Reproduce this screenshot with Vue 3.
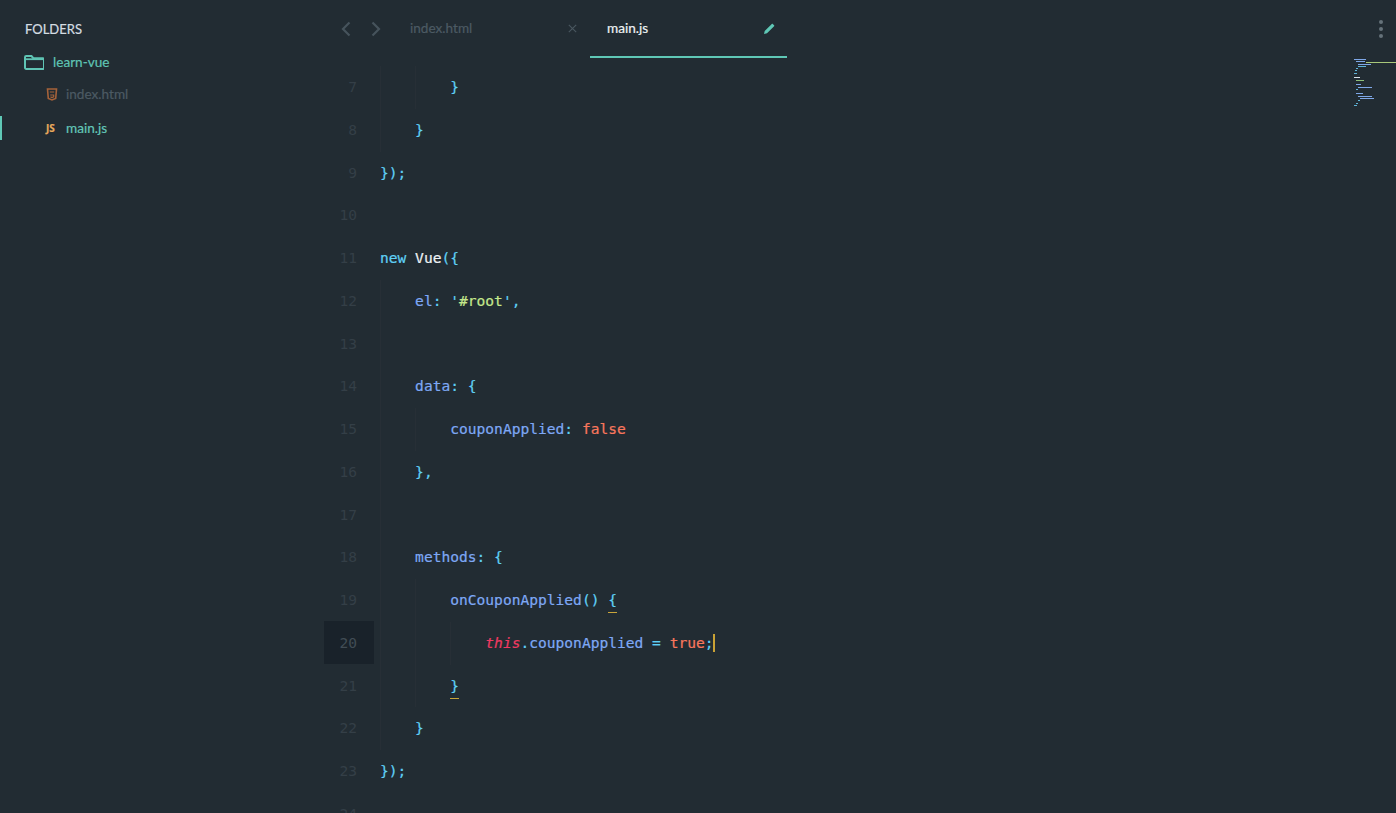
<script setup>
const C = { p: 'pun', k: 'key', w: 'wht', b: 'blu', s: 'str', o: 'org', t: 'ths' }
const lines = [
  { n: 7, guides: 2, code: [['}', 'p']] },
  { n: 8, guides: 1, code: [['}', 'p']] },
  { n: 9, guides: 0, code: [['});', 'p']] },
  { n: 10, guides: 0, code: [] },
  { n: 11, guides: 0, code: [['new', 'k'], [' Vue', 'w'], ['({', 'p']] },
  { n: 12, guides: 1, code: [['el', 'b'], [': ', 'p'], ["'", 'p'], ['#root', 's'], ["'", 'p'], [',', 'p']] },
  { n: 13, guides: 1, code: [] },
  { n: 14, guides: 1, code: [['data', 'b'], [': {', 'p']] },
  { n: 15, guides: 2, code: [['couponApplied', 'b'], [': ', 'p'], ['false', 'o']] },
  { n: 16, guides: 1, code: [['},', 'p']] },
  { n: 17, guides: 1, code: [] },
  { n: 18, guides: 1, code: [['methods', 'b'], [': {', 'p']] },
  { n: 19, guides: 2, code: [['onCouponApplied', 'b'], ['() ', 'p'], ['{', 'pm']] },
  { n: 20, guides: 3, active: true, code: [['this', 't'], ['.', 'p'], ['couponApplied', 'b'], [' = ', 'p'], ['true', 'o'], [';', 'p']] },
  { n: 21, guides: 2, code: [['}', 'pm']] },
  { n: 22, guides: 1, code: [['}', 'p']] },
  { n: 23, guides: 0, code: [['});', 'p']] },
  { n: 24, guides: 0, code: [] },
]
const cls = (c) => (c === 'pm' ? 'pun match' : C[c])
const mini = [
  { x: 0, w: 12, c: '#7fa8e8' }, { x: 2, w: 9, c: '#7fa8e8' }, { x: 4, w: 13, c: '#7fa8e8' },
  { x: 4, w: 8, c: '#5fb4d8' }, { x: 2, w: 2, c: '#5fb4d8' }, { x: 1, w: 2, c: '#5fb4d8' }, { x: 0, w: 3, c: '#5fb4d8' },
  { x: 0, w: 0, c: 'transparent' }, { x: 0, w: 6, c: '#d8e2ea' }, { x: 2, w: 8, c: '#8fc07a' },
  { x: 0, w: 0, c: 'transparent' }, { x: 2, w: 5, c: '#7fa8e8' }, { x: 4, w: 14, c: '#7fa8e8' }, { x: 2, w: 2, c: '#5fb4d8' },
  { x: 0, w: 0, c: 'transparent' }, { x: 2, w: 7, c: '#7fa8e8' }, { x: 4, w: 14, c: '#7fa8e8' }, { x: 6, w: 14, c: '#7fa8e8' },
  { x: 4, w: 2, c: '#5fb4d8' }, { x: 2, w: 2, c: '#5fb4d8' }, { x: 0, w: 3, c: '#5fb4d8' },
]
</script>

<template>
  <div class="app">
    <aside class="side">
      <div class="side-title">FOLDERS</div>
      <div class="row folder">
        <svg class="fold-ic" width="20" height="15" viewBox="0 0 20 15" fill="none">
          <path d="M1 2.200C1 1.500 1.500 1 2.200 1h5.300l1.800 2.200h9.500c.7 0 1.200.5 1.200 1.200v8.400c0 .7-.5 1.200-1.200 1.200H2.200C1.500 14 1 13.500 1 12.800z" stroke="#5fc4b4" stroke-width="2" />
          <path d="M1 4.200h18" stroke="#5fc4b4" stroke-width="1.800" />
        </svg>
        <span>learn-vue</span>
      </div>
      <div class="row file dim">
        <svg class="html-ic" width="12" height="13" viewBox="0 0 12 13" fill="none">
          <path d="M1.500 1h9l-.8 9.500L6 12l-3.700-1.500z" stroke="#a5623a" stroke-width="1.600" />
          <path d="M3.800 4h4.400M4.200 7h3.500v1.800L6 9.500l-1.500-.6" stroke="#a5623a" stroke-width="1.200" />
        </svg>
        <span>index.html</span>
      </div>
      <div class="row file on">
        <span class="js-ic">JS</span>
        <span>main.js</span>
      </div>
    </aside>

    <main class="editor">
      <header class="tabs">
        <nav class="nav">
          <svg width="10" height="16" viewBox="0 0 10 16" fill="none"><path d="M8.500 1.500 2 8l6.500 6.500" stroke="#46535c" stroke-width="2.200" /></svg>
          <svg width="10" height="16" viewBox="0 0 10 16" fill="none"><path d="M1.500 1.500 8 8l-6.500 6.500" stroke="#46535c" stroke-width="2.200" /></svg>
        </nav>
        <div class="tab">
          <span>index.html</span>
          <svg width="9" height="9" viewBox="0 0 9 9" fill="none"><path d="M.8.800l7.400 7.400M8.200.8 .8 8.200" stroke="#4a5760" stroke-width="1.100" /></svg>
        </div>
        <div class="tab active">
          <span>main.js</span>
          <svg width="11" height="11" viewBox="0 0 11 11"><path d="M0 11l.7-3L7.800.9c.3-.3.700-.3 1 0l1.300 1.300c.3.300.3.700 0 1L3 10.300z" fill="#5fc8b6" /></svg>
        </div>
      </header>

      <section class="code">
        <div v-for="l in lines" :key="l.n" class="line">
          <div class="num" :class="{ cur: l.active }">{{ l.n }}</div>
          <div class="text">
            <span v-for="g in l.guides" :key="g" class="ind"></span>
            <span v-for="(t, i) in l.code" :key="i" :class="cls(t[1])">{{ t[0] }}</span>
            <span v-if="l.active" class="caret"></span>
          </div>
        </div>
      </section>

      <div class="more"><i></i><i></i><i></i></div>
      <div class="minimap">
        <div class="mini-hl"></div>
        <div v-for="(m, i) in mini" :key="i" class="mini-row">
          <i :style="{ marginLeft: m.x + 'px', width: m.w + 'px', background: m.c }"></i>
        </div>
      </div>
    </main>
  </div>
</template>

<style>
html, body { margin: 0; background: #222c33; overflow: hidden; }
</style>

<style scoped>
.app {
  display: flex;
  height: 813px;
  overflow: hidden;
  background: #222c33;
  font-family: Lato, "Noto Sans", sans-serif;
  -webkit-text-stroke: 0.2px;
}
.side { width: 324px; flex: none; padding-top: 20px; box-sizing: border-box; }
.side-title { padding-left: 25px; font-size: 13px; line-height: 18px; color: #d5dde2; }
.row { display: flex; align-items: center; font-size: 13.600px; }
.folder { margin-top: 14px; height: 20px; padding-left: 24px; color: #5fc4b4; gap: 9px; }
.file { height: 24px; padding-left: 46px; gap: 8px; position: relative; }
.dim { margin-top: 10px; color: #4c5a63; }
.html-ic { flex: none; }
.on { margin-top: 10px; color: #62c7b8; }
.on::before { content: ""; position: absolute; left: 0; top: 0; bottom: 0; width: 2px; background: #5fc8b6; }
.js-ic { width: 12px; font: 700 10px/12px "Noto Sans", sans-serif; color: #e8a95c; }

.editor { flex: 1; min-width: 0; position: relative; overflow: hidden; }
.tabs { height: 58px; display: flex; }
.nav { width: 69px; display: flex; align-items: center; gap: 20px; padding: 0 0 0 17px; box-sizing: border-box; }
.nav svg { margin-top: -1px; }
.tab {
  width: 197px;
  box-sizing: border-box;
  padding: 0 13px 2px 17px;
  display: flex;
  align-items: center;
  justify-content: space-between;
  font-size: 13.600px;
  color: #4c5a63;
}
.tab.active { color: #eef2f4; border-bottom: 2px solid #5fc8b6; padding: 0 12px 0 17px; }

.code {
  padding-top: 8.200px;
  font-family: "DejaVu Sans Mono", monospace;
  font-size: 14.580px;
  line-height: 42.750px;
}
.line { display: flex; height: 42.750px; }
.num { width: 33px; padding-right: 17px; text-align: right; color: #343f47; flex: none; -webkit-text-stroke: 0; }
.num.cur { background: #19222a; color: #414d55; margin-top: -1px; height: 43px; line-height: 44.750px; }
.text { margin-left: 6px; white-space: pre; display: flex; align-items: stretch; position: relative; }
.ind { width: 35.120px; flex: none; box-shadow: inset 1px 0 0 #272f36; }
.pun { color: #5fd0f5; }
.key { color: #5fd0f5; }
.wht { color: #eef2f4; }
.blu { color: #7ea8f5; }
.str { color: #c5e88c; }
.org { color: #f9775d; }
.ths { color: #ef3a62; font-style: italic; }
.match { box-shadow: inset 0 -1px 0 #c9a53a; height: 26px; margin-top: 8px; line-height: 26px; }
.caret { width: 2px; height: 18px; margin: 12.500px 0 0 -1px; background: #c9a235; }

.more { position: absolute; top: 20px; right: 13px; display: flex; flex-direction: column; gap: 3px; }
.more i { width: 4px; height: 4px; border-radius: 50%; background: #65727a; }
.minimap { position: absolute; top: 59px; right: 22px; width: 20px; }
.mini-hl { position: absolute; top: 3px; left: 12px; width: 30px; height: 1px; background: #a8c87a; }
.mini-row { height: 2.300px; }
.mini-row i { display: block; height: 1px; }
</style>
